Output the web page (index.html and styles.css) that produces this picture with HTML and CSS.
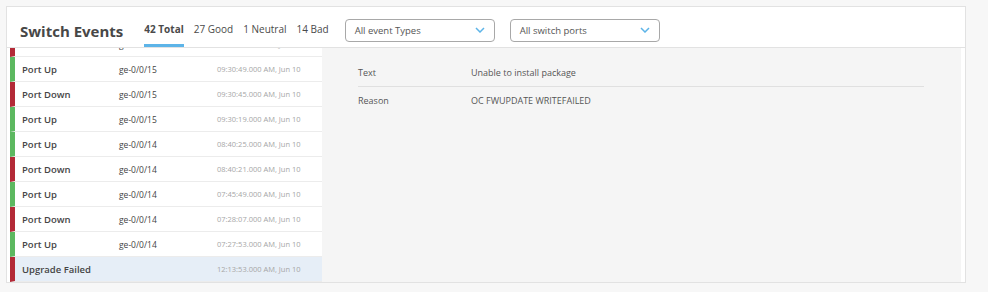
FILE: index.html
```html
<!DOCTYPE html>
<html lang="en">
<head>
  <meta charset="UTF-8">
  <title>Switch Events</title>
  <link rel="stylesheet" href="styles.css">
</head>
<body>
  <div class="panel">
    <div class="header">
      <h1>Switch Events</h1>
      <div class="tabs">
        <span class="tab active">42 Total</span>
        <span class="tab">27 Good</span>
        <span class="tab">1 Neutral</span>
        <span class="tab">14 Bad</span>
      </div>
      <div class="select">
        <span>All event Types</span>
        <svg class="chevron" viewBox="0 0 10 6"><path d="M1 1 L5 5 L9 1" /></svg>
      </div>
      <div class="select">
        <span>All switch ports</span>
        <svg class="chevron" viewBox="0 0 10 6"><path d="M1 1 L5 5 L9 1" /></svg>
      </div>
    </div>

    <div class="content">
      <div class="list">
        <div class="rows">
          <div class="row bad"><span class="name">Port Down</span><span class="port">ge-0/0/15</span><span class="time">09:31:02.000 AM, Jun 10</span></div>
          <div class="row good"><span class="name">Port Up</span><span class="port">ge-0/0/15</span><span class="time">09:30:49.000 AM, Jun 10</span></div>
          <div class="row bad"><span class="name">Port Down</span><span class="port">ge-0/0/15</span><span class="time">09:30:45.000 AM, Jun 10</span></div>
          <div class="row good"><span class="name">Port Up</span><span class="port">ge-0/0/15</span><span class="time">09:30:19.000 AM, Jun 10</span></div>
          <div class="row good"><span class="name">Port Up</span><span class="port">ge-0/0/14</span><span class="time">08:40:25.000 AM, Jun 10</span></div>
          <div class="row bad"><span class="name">Port Down</span><span class="port">ge-0/0/14</span><span class="time">08:40:21.000 AM, Jun 10</span></div>
          <div class="row good"><span class="name">Port Up</span><span class="port">ge-0/0/14</span><span class="time">07:45:49.000 AM, Jun 10</span></div>
          <div class="row bad"><span class="name">Port Down</span><span class="port">ge-0/0/14</span><span class="time">07:28:07.000 AM, Jun 10</span></div>
          <div class="row good"><span class="name">Port Up</span><span class="port">ge-0/0/14</span><span class="time">07:27:53.000 AM, Jun 10</span></div>
          <div class="row bad selected"><span class="name">Upgrade Failed</span><span class="port"></span><span class="time">12:13:53.000 AM, Jun 10</span></div>
        </div>
      </div>

      <div class="details">
        <div class="detail-row">
          <span class="label">Text</span>
          <span class="value">Unable to install package</span>
        </div>
        <div class="detail-row">
          <span class="label">Reason</span>
          <span class="value">OC FWUPDATE WRITEFAILED</span>
        </div>
      </div>
    </div>
  </div>
</body>
</html>
```

FILE: styles.css
```css
:root {
  --border-color: #e2e2e2;
  --text-color: #444;
  --muted-color: #a6a6a6;
  --accent-color: #5db4e8;
  --good-color: #5cb860;
  --bad-color: #b32a37;
}

* {
  box-sizing: border-box;
  margin: 0;
  padding: 0;
}

body {
  font-family: 'Open Sans', sans-serif;
  background-color: #f7f7f7;
  color: var(--text-color);
  padding: 6px 0 0 6px;
}

.panel {
  width: 960px;
  height: 277px;
  background-color: #fff;
  border: 1px solid var(--border-color);
  display: flex;
  flex-direction: column;
}

.header {
  height: 41px;
  flex-shrink: 0;
  display: flex;
  align-items: center;
  padding-left: 13px;
  border-bottom: 1px solid var(--border-color);
}

h1 {
  font-size: 15px;
  font-weight: 700;
  color: #474747;
  margin-top: 7px;
}

.tabs {
  display: flex;
  gap: 10px;
  margin-left: 21px;
  align-self: stretch;
}

.tab {
  font-size: 10px;
  display: flex;
  align-items: center;
  padding-top: 6px;
  border-bottom: 3px solid transparent;
  color: #4a4a4a;
}

.tab.active {
  font-weight: 700;
  border-bottom-color: var(--accent-color);
}

.select {
  width: 150px;
  height: 23px;
  margin-left: 16px;
  margin-top: 6px;
  border: 1px solid #a8a8a8;
  border-radius: 4px;
  display: flex;
  align-items: center;
  justify-content: space-between;
  padding: 0 9px 0 9px;
  font-size: 9.5px;
  color: #555;
}

.select + .select {
  margin-left: 15px;
}

.chevron {
  width: 10px;
  height: 6px;
  fill: none;
  stroke: var(--accent-color);
  stroke-width: 1.5;
}

.content {
  flex: 1;
  display: flex;
  min-height: 0;
  padding-right: 4px;
}

.list {
  width: 315px;
  padding-left: 3px;
  overflow: hidden;
}

.rows {
  margin-top: -16px;
}

.row {
  height: 25px;
  display: flex;
  align-items: center;
  border-left: 5px solid var(--good-color);
  border-bottom: 1px solid #ececec;
  padding-left: 7px;
}

.row.bad {
  border-left-color: var(--bad-color);
}

.row.selected {
  background-color: #e6eef7;
}

.name {
  width: 97px;
  font-size: 9.5px;
  font-weight: 600;
  color: #454545;
}

.port {
  width: 98px;
  font-size: 8.5px;
  color: #444;
}

.time {
  font-size: 7.5px;
  color: var(--muted-color);
}

.details {
  flex: 1;
  background-color: #f5f5f5;
  padding: 10px 37px 0 36px;
}

.detail-row {
  height: 28px;
  display: flex;
  align-items: center;
  font-size: 9px;
  color: #555;
}

.detail-row + .detail-row {
  border-top: 1px solid #e0e0e0;
}

.label {
  width: 113px;
}
```
